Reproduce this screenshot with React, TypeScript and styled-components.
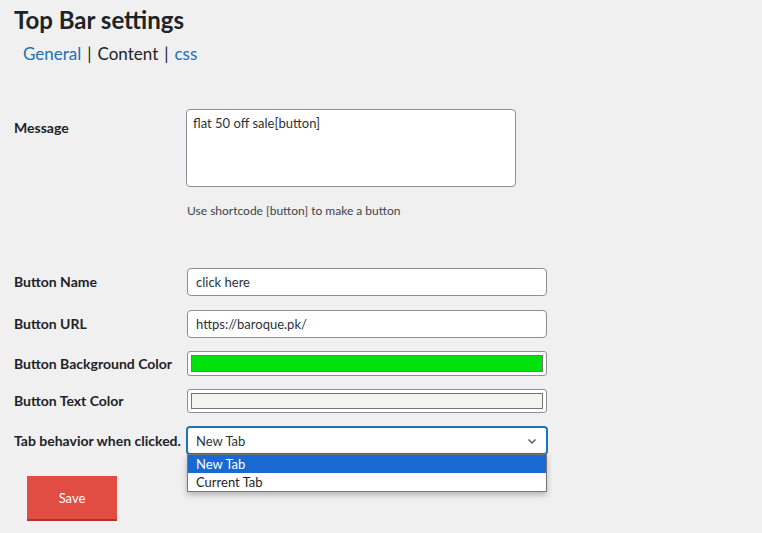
import styled, { createGlobalStyle } from 'styled-components';

const GlobalStyle = createGlobalStyle`
  body {
    margin: 0;
    background: #f0f0f1;
    font-family: Lato, "Liberation Sans", Arial, sans-serif;
    color: #3c434a;
  }
`;

const Page = styled.div`
  padding: 5px 0 0 14px;
  width: 748px;
  height: 528px;
`;

const Title = styled.h1`
  margin: 0;
  font-size: 24px;
  font-weight: 700;
  line-height: 30px;
  color: #1d2327;
`;

const Tabs = styled.nav`
  margin: 8px 0 0 9px;
  font-size: 17px;
  line-height: 22px;
  color: #1d2327;
`;

const Tab = styled.a<{ $active?: boolean }>`
  color: ${(p) => (p.$active ? '#1d2327' : '#2271b1')};
  text-decoration: none;
`;

const Sep = styled.span`
  margin: 0 6px;
  color: #1d2327;
`;

const Form = styled.div`
  margin-top: 44px;
`;

const Row = styled.div<{ $top?: boolean; $gap: number }>`
  display: grid;
  grid-template-columns: 172px 361px;
  align-items: ${(p) => (p.$top ? 'start' : 'center')};
  margin-top: ${(p) => p.$gap}px;
  position: relative;
`;

const Label = styled.label<{ $pad?: number }>`
  font-size: 14px;
  font-weight: 700;
  line-height: 18px;
  color: #1d2327;
  padding-top: ${(p) => p.$pad ?? 0}px;
  white-space: nowrap;
`;

const TextArea = styled.div`
  box-sizing: border-box;
  width: 330px;
  height: 78px;
  background: #fff;
  border: 1px solid #8c8f94;
  border-radius: 4px;
  padding: 5px 6px;
  font-size: 13px;
  color: #2c3338;
`;

const Hint = styled.p`
  margin: 16px 0 0 1px;
  font-size: 12px;
  color: #3c434a;
`;

const Field = styled.div<{ $h: number }>`
  box-sizing: border-box;
  margin-left: 1px;
  height: ${(p) => p.$h}px;
  background: #fff;
  border: 1px solid #8c8f94;
  border-radius: 4px;
  padding: 0 8px;
  display: flex;
  align-items: center;
  font-size: 13px;
  color: #2c3338;
`;

const ColorField = styled.div<{ $h: number }>`
  box-sizing: border-box;
  margin-left: 1px;
  height: ${(p) => p.$h}px;
  background: #fff;
  border: 1px solid #8c8f94;
  border-radius: 3px;
  padding: 3px;
  display: flex;
`;

const Swatch = styled.div<{ $color: string }>`
  flex: 1;
  background: ${(p) => p.$color};
  border: 1px solid #767676;
`;

const Select = styled.div`
  box-sizing: border-box;
  margin-left: 1px;
  height: 27px;
  background: #fff;
  border: 1px solid #2271b1;
  box-shadow: 0 0 0 1px #2271b1;
  border-radius: 3px;
  padding: 0 8px;
  display: flex;
  align-items: center;
  justify-content: space-between;
  font-size: 13px;
  color: #2c3338;
`;

const Menu = styled.ul`
  position: absolute;
  left: 173px;
  top: 27px;
  width: 360px;
  box-sizing: border-box;
  margin: 0;
  padding: 0;
  list-style: none;
  background: #fff;
  border: 1px solid #767676;
  box-shadow: 0 3px 6px rgba(0, 0, 0, 0.25);
  z-index: 2;
`;

const Option = styled.li<{ $selected?: boolean }>`
  height: 18px;
  line-height: 18px;
  padding: 0 8px;
  font-size: 13px;
  color: ${(p) => (p.$selected ? '#fff' : '#1d2327')};
  background: ${(p) => (p.$selected ? '#1a69d2' : 'transparent')};
`;

const SaveButton = styled.button`
  margin: 22px 0 0 13px;
  width: 90px;
  height: 45px;
  border: none;
  border-bottom: 2px solid #b0322b;
  background: #e14d43;
  color: #fff;
  font-family: inherit;
  font-size: 13px;
`;

const Chevron = () => (
  <svg width="12" height="12" viewBox="0 0 12 12" fill="none">
    <path d="M2.5 4.5 6 8l3.5-3.5" stroke="#50575e" strokeWidth="1.4" />
  </svg>
);

export default function App() {
  return (
    <Page>
      <GlobalStyle />
      <Title>Top Bar settings</Title>
      <Tabs>
        <Tab href="#">General</Tab>
        <Sep>|</Sep>
        <Tab $active>Content</Tab>
        <Sep>|</Sep>
        <Tab href="#">css</Tab>
      </Tabs>
      <Form>
        <Row $top $gap={0}>
          <Label $pad={10}>Message</Label>
          <div>
            <TextArea>flat 50 off sale[button]</TextArea>
            <Hint>Use shortcode [button] to make a button</Hint>
          </div>
        </Row>
        <Row $gap={50}>
          <Label>Button Name</Label>
          <Field $h={28}>click here</Field>
        </Row>
        <Row $gap={14}>
          <Label>Button URL</Label>
          <Field $h={28}>https://baroque.pk/</Field>
        </Row>
        <Row $gap={13}>
          <Label>Button Background Color</Label>
          <ColorField $h={25}>
            <Swatch $color="#00e20a" />
          </ColorField>
        </Row>
        <Row $gap={13}>
          <Label>Button Text Color</Label>
          <ColorField $h={24}>
            <Swatch $color="#f5f2f2" />
          </ColorField>
        </Row>
        <Row $gap={14}>
          <Label>Tab behavior when clicked.</Label>
          <Select>
            New Tab
            <Chevron />
          </Select>
          <Menu>
            <Option $selected>New Tab</Option>
            <Option>Current Tab</Option>
          </Menu>
        </Row>
        <SaveButton>Save</SaveButton>
      </Form>
    </Page>
  );
}
